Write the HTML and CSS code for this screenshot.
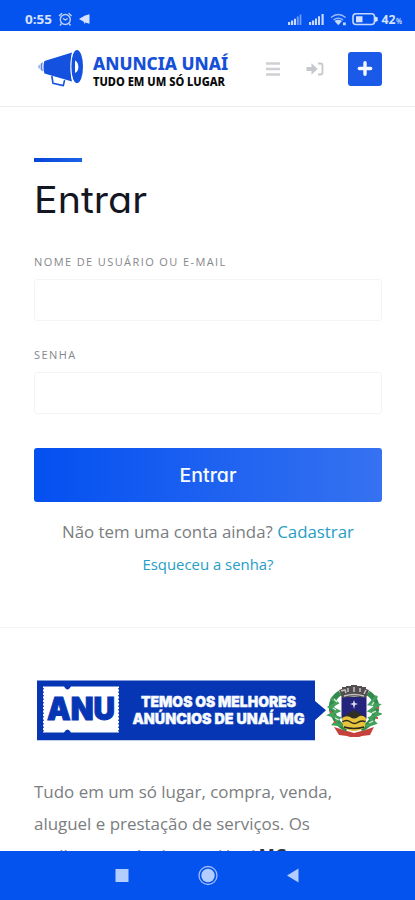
FILE: index.html
```html
<!DOCTYPE html>
<html lang="pt-BR">
<head>
<meta charset="utf-8">
<meta name="viewport" content="width=device-width, initial-scale=1">
<title>Anuncia Unaí</title>
<link rel="stylesheet" href="styles.css">
</head>
<body>
<div class="screen">
  <div class="status">
    <svg width="415" height="31" viewBox="0 0 415 31">
      <g fill="#d5e2ff">
        <text class="clock" x="25" y="24" textLength="27" lengthAdjust="spacingAndGlyphs">0:55</text>
        <g fill="none" stroke="#bdd1ff" stroke-width="1.4">
          <circle cx="65.3" cy="19.5" r="5"/>
          <path d="M59 16l3-2.8M71.600 16l-3-2.800M61.500 23.500l-1.500 2M69 23.500l1.500 2M63 18.500l2.300 1.500 2.300-1.500"/>
        </g>
        <path d="M79 19l6-3.500 4.500-1.200v9.400L85 22.500z"/>
        <path d="M84.500 20.500v3" stroke="#d5e2ff"/>
        <g fill="#c6d8ff">
          <path d="M288 22h2.200v3H288zM291 20.500h2.200V25H291zM294 18.800h2V25h-2z"/>
          <path d="M296.800 16.500h1.900V25h-1.900zM299.600 14.500h1.800V25h-1.800z" opacity=".55"/>
          <path d="M309 22h2.200v3H309zM312 20.500h2.200V25H312zM315 18.500h2V25h-2zM318 16.300h2V25h-2zM321.500 14h2.200v11h-2.200z"/>
        </g>
        <g fill="none" stroke="#9dbbff" stroke-width="1.300">
          <path d="M331 17.500q7.300-6 14.600 0M333.500 20q4.800-3.800 9.600 0"/>
        </g>
        <path d="M334.500 21q3.800-2.500 7.500 0l-3.700 4.200zM343 22.500h2.800v2.800H343z" fill="#c6d8ff"/>
        <rect x="353" y="13.700" width="21.500" height="10.800" rx="3" fill="none" stroke="#c6d8ff" stroke-width="1.600"/>
        <path d="M356 16.200h6.500v6H356zM375 16.500l2.700 1v3.500l-2.700 1z" fill="#d5e2ff"/>
        <text class="battery" x="381.500" y="23.800" textLength="14" lengthAdjust="spacingAndGlyphs">42</text>
        <text class="percent" x="396" y="23.800" textLength="6" lengthAdjust="spacingAndGlyphs">%</text>
      </g>
    </svg>
  </div>

  <header class="header">
    <svg class="logo" width="194" height="48" viewBox="37 45 194 48">
      <g fill="#1451df">
        <path d="M44.500 61L72 52.500C70 60 70 74 72 81.500L44.500 73.500C43.200 70 43.200 64 44.500 61z"/>
        <path d="M43 62c-1 3-1 6.500 0 9.500l-2.400-1.700v-6z" fill="#5d83df"/>
        <path d="M39.700 64.500v4.500l-1.300-1v-2.500z" fill="#7b9be8"/>
        <ellipse cx="77" cy="66.600" rx="6" ry="16.600"/>
        <path d="M73.400 51.500c-3.200 7-3.200 23 0 30.500" fill="none" stroke="#fff" stroke-width=".8"/>
        <path d="M75 60.500c4.500 2 4.500 11 0 12.500z" fill="#fff"/>
        <path d="M51.800 76l1.200 7.300 10.300 2.300 1.300-5.500" fill="none" stroke="#1451df" stroke-width="1.600" stroke-linejoin="round"/>
      </g>
      <text class="brand" x="93" y="69.500" textLength="135" lengthAdjust="spacingAndGlyphs">ANUNCIA UNAÍ</text>
      <text class="tagline" x="93" y="86" textLength="132" lengthAdjust="spacingAndGlyphs">TUDO EM UM SÓ LUGAR</text>
    </svg>
    <div class="actions">
      <svg width="16" height="16" viewBox="0 0 16 16"><path d="M0 2.500h14M0 8h14M0 13.500h14" stroke="#cdd0d4" stroke-width="2.300"/></svg>
      <svg width="18" height="16" viewBox="0 0 18 16"><path d="M.5 5.900h5V2.300L11.700 8l-6.200 5.700v-3.600h-5z" fill="#c5c8cd"/><path d="M12 2.500h2.500q2 0 2 2v7q0 2-2 2H12" fill="none" stroke="#c5c8cd" stroke-width="1.800"/></svg>
      <a class="add"><svg width="16" height="16" viewBox="0 0 16 16"><path d="M8 1.800v11.400M2.300 7.500h11.400" stroke="#f4f8ff" stroke-width="3.400" stroke-linecap="round"/></svg></a>
    </div>
  </header>

  <main class="login">
    <div class="accent"></div>
    <h1 class="title"><svg width="120" height="50" viewBox="0 0 120 50"><text x="0" y="37.500" textLength="113" lengthAdjust="spacingAndGlyphs">Entrar</text></svg></h1>
    <form>
      <label class="label user">NOME DE USUÁRIO OU E-MAIL</label>
      <div class="input"></div>
      <label class="label">SENHA</label>
      <div class="input"></div>
      <div class="submit"><svg width="60" height="30" viewBox="0 0 60 30"><text x="1.500" y="22" textLength="57" lengthAdjust="spacingAndGlyphs">Entrar</text></svg></div>
    </form>
    <p class="register">Não tem uma conta ainda? <a>Cadastrar</a></p>
    <p class="forgot"><a>Esqueceu a senha?</a></p>
  </main>

  <footer class="footer">
    <svg class="banner" width="348" height="64" viewBox="34 679 348 64">
      <path d="M37 680.500h278v20.500l11 9.200-11 10v20H37z" fill="#0636b4"/>
      <path d="M43 686.500h21q3.500 6 7 0h48v46H71q-3.500-6-7 0H43z" fill="#fff"/>
      <path d="M43 688v44M119 688v44" stroke="#0636b4" stroke-width="1.500" stroke-dasharray="1.500 2"/>
      <text class="ticket" x="47" y="720" textLength="68" lengthAdjust="spacingAndGlyphs">ANU</text>
      <text class="slogan" x="141" y="706.500" textLength="155" lengthAdjust="spacingAndGlyphs">TEMOS OS MELHORES</text>
      <text class="slogan" x="132.500" y="724" textLength="172" lengthAdjust="spacingAndGlyphs">ANÚNCIOS DE UNAÍ-MG</text>
      <g>
        <path d="M334 727l10 3 10 3 11-3 9-3-4 8-8 1-3 1h-9l-3-1-8-1z" fill="#c6403c"/>
        <path d="M340 693c-8 5-11 14-6 23 3 7 8 11 13 13M368 693c8 5 11 14 6 23-3 7-8 11-13 13" fill="none" stroke="#318b4b" stroke-width="5.500"/>
        <path d="M331 698l6 5-7 4 8 4-8 4 9 3-5 6 8 1M377 696l-7 8 8 1-8 6 9 3-9 4 5 5-9 3" fill="none" stroke="#42a25c" stroke-width="3"/>
        <path d="M334 699l3 3M333 708l3 2M335 718l4 2M374 702l-2 3M376 711l-4 2M373 721l-4 2" stroke="#d8eedb" stroke-width="1.300"/>
        <path d="M330 712h2M334 722h2M377 708h2M376 718h2" stroke="#c85945" stroke-width="2"/>
        <path d="M341.500 697h25v21q-2 10-12.500 13-10.500-3-12.500-13z" fill="#24247c"/>
        <path d="M342 718l5-4 7-4 7 4 5 4v3h-24z" fill="#302f26"/>
        <path d="M342 718q4-3 8-1 4 3 8 0 4-3 8 1l-1 9q-5 4-11 4t-11-4z" fill="#e8c33d"/>
        <path d="M342.500 722q4-3 8 0 4 3 8 0 4-2 7 0M344 727q10 3 20 0" fill="none" stroke="#29291d" stroke-width="1.500"/>
        <path d="M339 690l3-1v-2h4v-1h5v-1h6v1h5v1h4v2l3 1-3 8q-12-3-24 0z" fill="#514d50"/>
        <path d="M341 691l4-1 1 3M348 688v4M354 687v5M360 688v4M366 690l-2 4M344 696q10-3 20 0" fill="none" stroke="#c7c2c0" stroke-width="1.500"/>
        <path d="M354 700l1 3 3 1-3 1-1 4-1-4-3-1 3-1z" fill="#dadaf2"/>
      </g>
    </svg>
    <p class="about">Tudo em um só lugar, compra, venda,<br>aluguel e prestação de serviços. Os<br>melhores anúncios em Unaí <b>MG</b></p>
  </footer>

  <nav class="nav">
    <svg width="415" height="49" viewBox="0 0 415 49">
      <g fill="#b4cdff">
        <rect x="115.500" y="18" width="13" height="13"/>
        <circle cx="208" cy="24.500" r="6.700"/>
        <circle cx="208" cy="24.500" r="9" fill="none" stroke="#9dbdff" stroke-width="1.300"/>
        <path d="M287 24.500l11.500-7v14z"/>
      </g>
    </svg>
  </nav>
</div>
</body>
</html>
```
FILE: styles.css
```css
* { box-sizing: border-box; }
body { margin: 0; background: #fff; font-family: "Open Sans", sans-serif; }
svg { display: block; }
p, h1 { margin: 0; }

.screen {
  width: 415px;
  height: 900px;
  display: flex;
  flex-direction: column;
  overflow: hidden;
}

.status { height: 31px; flex: none; background: #0553ef; }
.clock { font: 700 13px "Open Sans", sans-serif; }
.battery { font: 700 12px "Open Sans", sans-serif; }
.percent { font: 600 8px "Open Sans", sans-serif; }

.header {
  height: 76px;
  flex: none;
  display: flex;
  justify-content: space-between;
  align-items: center;
  padding: 0 33px 0 37px;
  border-bottom: 1px solid #ededed;
}
.logo { overflow: visible; }
.brand { font: 800 18.500px "Noto Sans", sans-serif; fill: #164fd8; }
.tagline { font: 800 11.500px "Noto Sans", sans-serif; fill: #090909; }
.actions { display: flex; align-items: center; gap: 24px; }
.add {
  width: 34px;
  height: 34px;
  border-radius: 3px;
  background: #1b5ae8;
  display: flex;
  align-items: center;
  justify-content: center;
}

.login { height: 521px; flex: none; padding: 51px 33px 0 34px; border-bottom: 1px solid #f4f4f4; }
.accent { width: 48px; height: 4px; background: linear-gradient(90deg, #0645d8, #1c63ea); }
.title { height: 50px; margin-top: 13px; }
.title text { font: 400 37px Inter, sans-serif; font-feature-settings: "cv11"; fill: #141722; }

.label {
  display: block;
  height: 18px;
  margin: 25px 0 8px;
  font-size: 11px;
  line-height: 18px;
  letter-spacing: 1.400px;
  color: #85878b;
}
.user { margin-top: 28px; }
.input { height: 42px; border: 1px solid #f4f4f4; border-radius: 3px; }
.submit {
  height: 54px;
  margin-top: 34px;
  border-radius: 3px;
  background: linear-gradient(90deg, #0450f0, #3672f1);
  display: flex;
  align-items: center;
  justify-content: center;
}
.submit text { font: 500 19px Inter, sans-serif; font-feature-settings: "cv11"; fill: #f8fbff; }
.register, .forgot { text-align: center; line-height: 32px; white-space: nowrap; color: #7b7d80; }
.register { margin-top: 14px; font-size: 16.850px; }
.forgot { font-size: 14.900px; }
.login a { color: #269dc5; }

.footer { flex: 1; min-height: 0; overflow: hidden; padding: 51px 33px 0 34px; }
.ticket { font: 900 31px Inter, sans-serif; fill: #0636b4; stroke: #0636b4; stroke-width: 1; }
.slogan { font: 900 14.500px Inter, sans-serif; fill: #f7faff; stroke: #f7faff; stroke-width: .4; }
.about { margin-top: 33px; font-size: 16.930px; line-height: 32px; color: #7b7d80; white-space: nowrap; }
.about b { color: #34363a; }

.nav { height: 49px; flex: none; background: #0553ef; }
```
